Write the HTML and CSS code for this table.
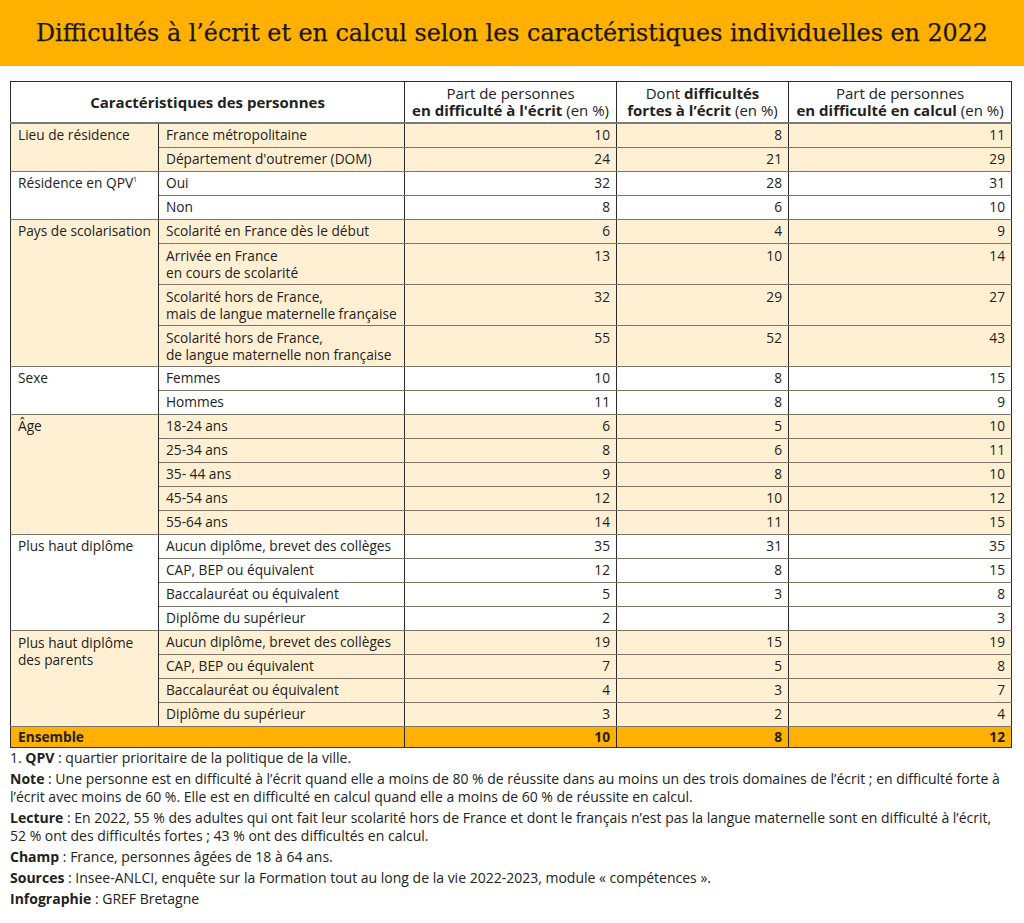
FILE: index.html
```html
<!DOCTYPE html>
<html lang="fr">
<head>
<meta charset="utf-8">
<title>Difficultés à l’écrit et en calcul</title>
<link rel="stylesheet" href="styles.css">
</head>
<body>
<header class="banner">
  <h1 class="title">Difficultés à l’écrit et en calcul selon les caractéristiques individuelles en 2022</h1>
</header>
<main class="content">
<table class="data">
  <colgroup>
    <col class="c1"><col class="c2"><col class="c3"><col class="c4"><col class="c5">
  </colgroup>
  <thead>
    <tr>
      <th colspan="2" class="h-main">Caractéristiques des personnes</th>
      <th>Part de personnes<br><b>en difficulté à l'écrit</b> (en %)</th>
      <th>Dont <b>difficultés</b><br><b>fortes à l’écrit</b> (en %)</th>
      <th>Part de personnes<br><b>en difficulté en calcul</b> (en %)</th>
    </tr>
  </thead>
  <tbody class="beige">
    <tr><td rowspan="2" class="grp">Lieu de résidence</td><td>France métropolitaine</td><td class="n">10</td><td class="n">8</td><td class="n">11</td></tr>
    <tr><td>Département d'outremer (DOM)</td><td class="n">24</td><td class="n">21</td><td class="n">29</td></tr>
  </tbody>
  <tbody class="white">
    <tr><td rowspan="2" class="grp">Résidence en QPV<sup>1</sup></td><td>Oui</td><td class="n">32</td><td class="n">28</td><td class="n">31</td></tr>
    <tr><td>Non</td><td class="n">8</td><td class="n">6</td><td class="n">10</td></tr>
  </tbody>
  <tbody class="beige">
    <tr><td rowspan="4" class="grp">Pays de scolarisation</td><td>Scolarité en France dès le début</td><td class="n">6</td><td class="n">4</td><td class="n">9</td></tr>
    <tr class="two"><td>Arrivée en France<br>en cours de scolarité</td><td class="n">13</td><td class="n">10</td><td class="n">14</td></tr>
    <tr class="two"><td>Scolarité hors de France,<br>mais de langue maternelle française</td><td class="n">32</td><td class="n">29</td><td class="n">27</td></tr>
    <tr class="two"><td>Scolarité hors de France,<br>de langue maternelle non française</td><td class="n">55</td><td class="n">52</td><td class="n">43</td></tr>
  </tbody>
  <tbody class="white">
    <tr><td rowspan="2" class="grp">Sexe</td><td>Femmes</td><td class="n">10</td><td class="n">8</td><td class="n">15</td></tr>
    <tr><td>Hommes</td><td class="n">11</td><td class="n">8</td><td class="n">9</td></tr>
  </tbody>
  <tbody class="beige">
    <tr><td rowspan="5" class="grp">Âge</td><td>18-24 ans</td><td class="n">6</td><td class="n">5</td><td class="n">10</td></tr>
    <tr><td>25-34 ans</td><td class="n">8</td><td class="n">6</td><td class="n">11</td></tr>
    <tr><td>35- 44 ans</td><td class="n">9</td><td class="n">8</td><td class="n">10</td></tr>
    <tr><td>45-54 ans</td><td class="n">12</td><td class="n">10</td><td class="n">12</td></tr>
    <tr><td>55-64 ans</td><td class="n">14</td><td class="n">11</td><td class="n">15</td></tr>
  </tbody>
  <tbody class="white">
    <tr><td rowspan="4" class="grp">Plus haut diplôme</td><td>Aucun diplôme, brevet des collèges</td><td class="n">35</td><td class="n">31</td><td class="n">35</td></tr>
    <tr><td>CAP, BEP ou équivalent</td><td class="n">12</td><td class="n">8</td><td class="n">15</td></tr>
    <tr><td>Baccalauréat ou équivalent</td><td class="n">5</td><td class="n">3</td><td class="n">8</td></tr>
    <tr><td>Diplôme du supérieur</td><td class="n">2</td><td class="n"></td><td class="n">3</td></tr>
  </tbody>
  <tbody class="beige">
    <tr><td rowspan="4" class="grp grp-two">Plus haut diplôme<br>des parents</td><td>Aucun diplôme, brevet des collèges</td><td class="n">19</td><td class="n">15</td><td class="n">19</td></tr>
    <tr><td>CAP, BEP ou équivalent</td><td class="n">7</td><td class="n">5</td><td class="n">8</td></tr>
    <tr><td>Baccalauréat ou équivalent</td><td class="n">4</td><td class="n">3</td><td class="n">7</td></tr>
    <tr><td>Diplôme du supérieur</td><td class="n">3</td><td class="n">2</td><td class="n">4</td></tr>
  </tbody>
  <tbody class="total">
    <tr><td colspan="2">Ensemble</td><td class="n">10</td><td class="n">8</td><td class="n">12</td></tr>
  </tbody>
</table>
<div class="notes">
  <p>1. <b>QPV</b> : quartier prioritaire de la politique de la ville.</p>
  <p><b>Note</b> : Une personne est en difficulté à l’écrit quand elle a moins de 80 % de réussite dans au moins un des trois domaines de l’écrit ; en difficulté forte à l’écrit avec moins de 60 %. Elle est en difficulté en calcul quand elle a moins de 60 % de réussite en calcul.</p>
  <p><b>Lecture</b> : En 2022, 55 % des adultes qui ont fait leur scolarité hors de France et dont le français n’est pas la langue maternelle sont en difficulté à l’écrit,<br>52 % ont des difficultés fortes ; 43 % ont des difficultés en calcul.</p>
  <p><b>Champ</b> : France, personnes âgées de 18 à 64 ans.</p>
  <p><b>Sources</b> : Insee-ANLCI, enquête sur la Formation tout au long de la vie 2022-2023, module « compétences ».</p>
  <p><b>Infographie</b> : GREF Bretagne</p>
</div>
</main>
</body>
</html>
```

FILE: styles.css
```css
html, body {
  margin: 0;
  padding: 0;
  background: #fff;
}
body {
  font-family: "Open Sans", "Liberation Sans", sans-serif;
  font-size: 13.7px;
  color: #222;
}
.banner {
  background: #ffb000;
  height: 66px;
  display: flex;
  align-items: center;
  justify-content: center;
}
.title {
  margin: 0;
  font-family: "DejaVu Serif", "Liberation Serif", serif;
  font-weight: normal;
  font-size: 23.8px;
  color: #1a1710;
  letter-spacing: 0;
  -webkit-text-stroke: 0.25px #1a1710;
}
.content {
  padding: 15px 13px 0 10px;
}
.data {
  border-collapse: collapse;
  width: 1001px;
  table-layout: fixed;
  line-height: 16px;
}
.c1 { width: 148px; }
.c2 { width: 246px; }
.c3 { width: 212px; }
.c4 { width: 172px; }
.c5 { width: 223px; }
.data th {
  font-weight: normal;
  font-size: 15px;
  line-height: 17px;
  text-align: center;
  padding: 3px 4px 3px;
  border: 1px solid #2b2b2b;
  border-bottom: 2px solid #7a7a7a;
  vertical-align: middle;
  white-space: nowrap;
}
.data th b, .notes b { font-weight: 700; }
.data th.h-main { font-weight: 700; }
.data td {
  padding: 3px 6px 4px 7px;
  border-left: 1px solid #2b2b2b;
  border-right: 1px solid #2b2b2b;
  border-top: 1px solid #7d7668;
  border-bottom: 1px solid #7d7668;
  vertical-align: top;
  white-space: nowrap;
}
.data tr.two td { padding-top: 3px; padding-bottom: 3px; line-height: 17px; }
.data td.grp-two { line-height: 17px; }
.data td.n { text-align: right; padding-right: 6px; }
.data tbody { border-top: 1px solid #5a5448; }
.beige td { background: #fff0d3; }
.white td { background: #fff; }
.total td {
  background: #ffb000;
  font-weight: 700;
  padding-top: 2px;
  padding-bottom: 2px;
  border-bottom: 1px solid #3a3020;
  border-top: 1px solid #6a5a30;
}
sup {
  font-size: 7px;
  line-height: 0;
  vertical-align: 6px;
}
.notes {
  padding-top: 1px;
  font-size: 14px;
  line-height: 18px;
}
.notes p {
  margin: 0 0 3px;
}
```
